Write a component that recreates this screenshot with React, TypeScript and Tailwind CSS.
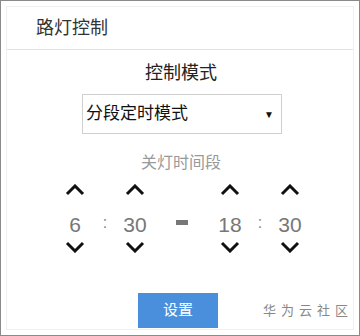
import React from 'react';

const Chevron: React.FC<{ down?: boolean }> = ({ down }) => (
  <svg width="22" height="12" viewBox="0 0 22 12" className="block">
    <polyline
      points={down ? '3,2 11,10 19,2' : '3,10 11,2 19,10'}
      fill="none"
      stroke="#111"
      strokeWidth="3"
      strokeLinecap="butt"
      strokeLinejoin="miter"
    />
  </svg>
);

const TimeColumn: React.FC<{ value: string }> = ({ value }) => (
  <div className="w-[40px] flex flex-col items-center">
    <div className="mt-[2px]">
      <Chevron />
    </div>
    <div className="mt-[14px] h-[30px] leading-[30px] text-[21px] text-[#777]">{value}</div>
    <div className="mt-[1px]">
      <Chevron down />
    </div>
  </div>
);

const Colon = () => (
  <div className="w-[20px] pt-[31px] text-center text-[16px] leading-[20px] text-[#888]">:</div>
);

export default function App() {
  return (
    <div
      className="w-[360px] h-[336px] bg-white border border-[#8a8a8a] p-[5px]"
      style={{ fontFamily: '"Liberation Sans", "Noto Sans CJK SC", sans-serif' }}
    >
      <div className="h-full border border-[#f0f0f0] flex flex-col">
        {/* Header */}
        <div className="h-[43px] border-b border-[#e3e3e3] pl-[29px] flex items-center">
          <span className="text-[18px] text-[#333]">路灯控制</span>
        </div>

        {/* Mode */}
        <div className="mt-[10px] text-center text-[18px] leading-[26px] text-[#222] pl-[2px]">控制模式</div>
        <div className="mt-[8px] flex justify-center pl-[4px]">
          <div className="w-[200px] h-[40px] border border-[#cfcfcf] flex items-center justify-between pl-[3px] pr-[7px]">
            <span className="text-[17px] text-[#111]">分段定时模式</span>
            <span className="text-[10px] text-[#111]">▼</span>
          </div>
        </div>

        {/* Off period */}
        <div className="mt-[19px] text-center text-[16px] leading-[20px] text-[#999] pl-[2px]">关灯时间段</div>

        <div className="mt-[9px] flex pl-[48px]">
          <TimeColumn value="6" />
          <Colon />
          <TimeColumn value="30" />
          <div className="w-[55px] flex justify-center pt-[38px]">
            <div className="w-[12px] h-[5px] bg-[#777] ml-[-1px]" />
          </div>
          <TimeColumn value="18" />
          <Colon />
          <TimeColumn value="30" />
        </div>

        {/* Footer */}
        <div className="mt-auto mb-[1px] flex items-center">
          <div className="w-[131px]" />
          <button className="w-[80px] h-[35px] bg-[#4a8fdb] text-white text-[15px]">设置</button>
          <div className="ml-[45px] whitespace-nowrap text-[13px] tracking-[5px] text-[#888]">华为云社区</div>
        </div>
      </div>
    </div>
  );
}
